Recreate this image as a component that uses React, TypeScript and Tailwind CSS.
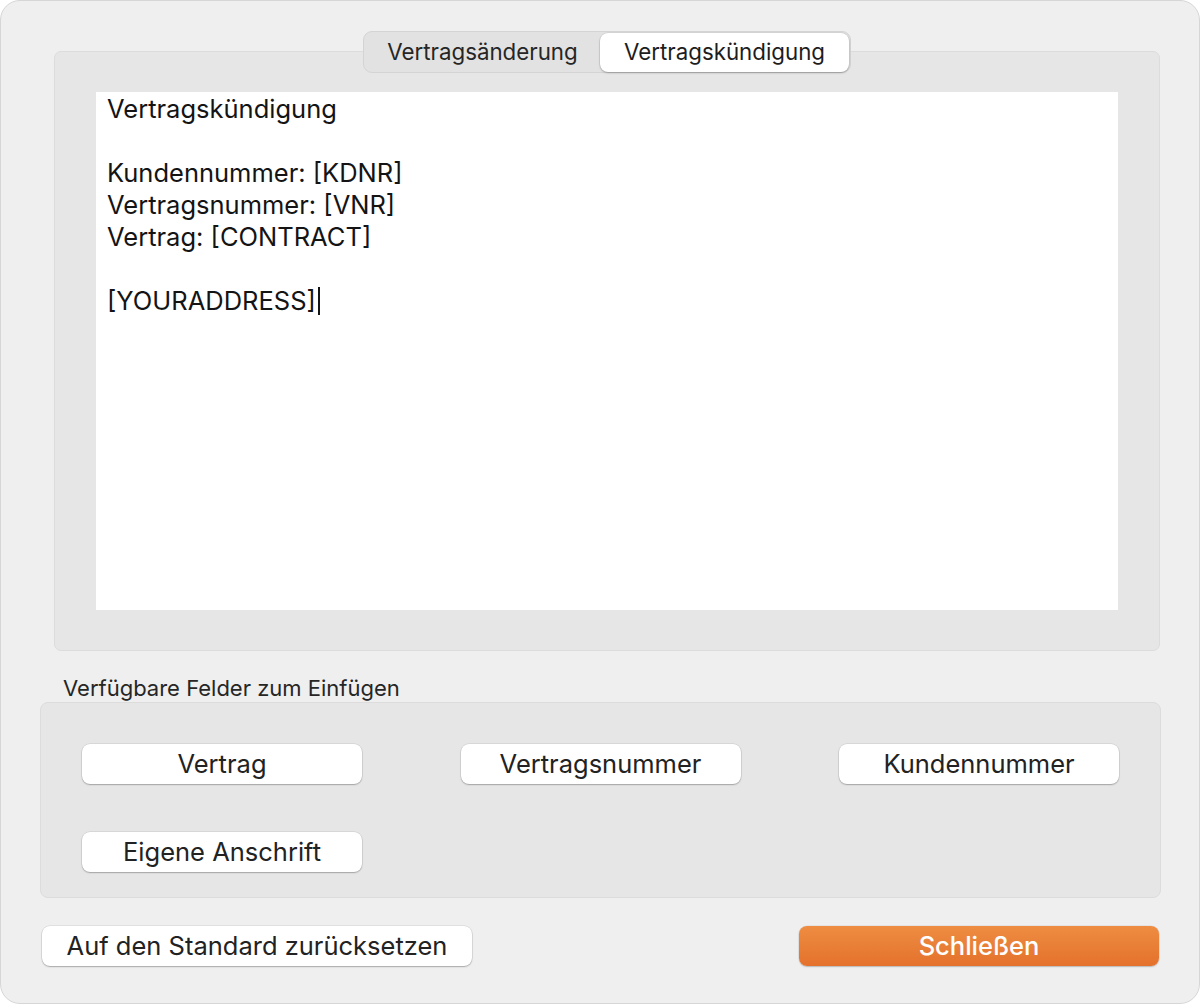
import React from "react";

const font = { fontFamily: "Inter, 'Noto Sans', 'Liberation Sans', sans-serif" };

function FieldButton({ label }: { label: string }) {
  return (
    <button className="h-[40px] w-[280px] rounded-[8px] bg-white text-[25.5px] text-[#222222] shadow-[0_0_0_0.5px_rgba(0,0,0,0.12),0_1px_1.5px_rgba(0,0,0,0.25)]">
      {label}
    </button>
  );
}

export default function App() {
  return (
    <div className="w-[1200px] h-[1004px] bg-white" style={font}>
      <div className="w-full h-full rounded-[20px] bg-[#efefef] border border-[#d6d6d6] flex flex-col px-[39px]">
        {/* Tab panel */}
        <div className="relative mt-[50px] ml-[14px] h-[600px] w-[1106px] rounded-[7px] bg-[#e6e6e6] border border-[#dcdcdc] px-[41px] pt-[40px] pb-[40px]">
          <div className="absolute left-1/2 -translate-x-1/2 -top-[21px] flex items-center h-[42px] w-[488px] rounded-[9px] bg-[#e2e2e2] border border-[#d4d4d4] p-[1px]">
            <div className="flex-1 h-full flex items-center justify-center text-[22.3px] text-[#262626]">
              Vertragsänderung
            </div>
            <div className="w-[249px] h-[39px] rounded-[8px] bg-white flex items-center justify-center text-[22.3px] text-[#1d1d1d] shadow-[0_0_0_0.5px_rgba(0,0,0,0.1),0_1px_2px_rgba(0,0,0,0.25)]">
              Vertragskündigung
            </div>
          </div>
          <div className="w-full h-full bg-white px-[11px] pt-[1px] text-[25.5px] leading-[32px] text-[#141414]">
            <div>Vertragskündigung</div>
            <div>&nbsp;</div>
            <div>Kundennummer: [KDNR]</div>
            <div>Vertragsnummer: [VNR]</div>
            <div>Vertrag: [CONTRACT]</div>
            <div>&nbsp;</div>
            <div className="flex items-center">
              [YOURADDRESS]
              <span className="inline-block w-[2px] h-[28px] bg-[#141414] ml-[2px]" />
            </div>
          </div>
        </div>

        {/* Fields label */}
        <div className="mt-[25px] ml-[23px] h-[24px] flex items-center text-[22px] text-[#262626]">
          Verfügbare Felder zum Einfügen
        </div>

        {/* Field group */}
        <div className="mt-[2px] h-[196px] w-[1121px] rounded-[8px] bg-[#e6e6e6] border border-[#dcdcdc] px-[41px] pt-[41px]">
          <div className="grid grid-cols-[280px_280px_280px] justify-between gap-y-[48px]">
            <FieldButton label="Vertrag" />
            <FieldButton label="Vertragsnummer" />
            <FieldButton label="Kundennummer" />
            <FieldButton label="Eigene Anschrift" />
          </div>
        </div>

        {/* Bottom buttons */}
        <div className="mt-[28px] flex justify-between pl-[2px] pr-[1px]">
          <button className="h-[40px] w-[430px] rounded-[8px] bg-white text-[25.5px] text-[#222222] shadow-[0_0_0_0.5px_rgba(0,0,0,0.12),0_1px_1.5px_rgba(0,0,0,0.25)]">
            Auf den Standard zurücksetzen
          </button>
          <button className="h-[40px] w-[360px] rounded-[8px] bg-gradient-to-b from-[#ee8d42] to-[#e4712c] text-[25.5px] font-medium text-white shadow-[0_0_0_0.5px_rgba(0,0,0,0.08),0_1px_1.5px_rgba(0,0,0,0.2)]">
            Schließen
          </button>
        </div>
      </div>
    </div>
  );
}
